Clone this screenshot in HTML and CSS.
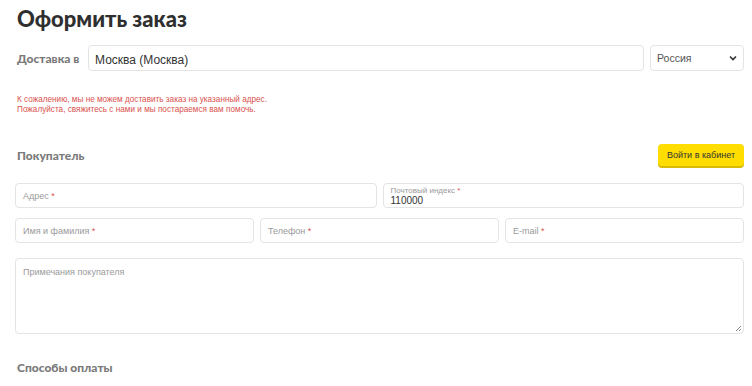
FILE: index.html
```html
<!DOCTYPE html>
<html lang="ru">
<head>
  <meta charset="UTF-8">
  <meta name="viewport" content="width=device-width, initial-scale=1.0">
  <title>Оформить заказ</title>
  <link rel="stylesheet" href="styles.css">
</head>
<body>
  <div class="order">
    <h1 class="order-title">Оформить заказ</h1>

    <div class="delivery">
      <div class="delivery-label">Доставка в</div>
      <div class="delivery-city">Москва (Москва)</div>
      <div class="delivery-country">
        Россия
        <svg width="8" height="6" viewBox="0 0 8 6"><path d="M1 1.5 L4 4.5 L7 1.5" fill="none" stroke="#333" stroke-width="1.6"/></svg>
      </div>
    </div>

    <div class="delivery-error">
      К сожалению, мы не можем доставить заказ на указанный адрес.<br>
      Пожалуйста, свяжитесь с нами и мы постараемся вам помочь.
    </div>

    <div class="section-head">
      <h2 class="section-title">Покупатель</h2>
      <button class="login-btn">Войти в кабинет</button>
    </div>

    <div class="field-row">
      <div class="field">Адрес <span class="req">*</span></div>
      <div class="field field-filled">
        <span class="field-label">Почтовый индекс <span class="req">*</span></span>
        <span class="field-value">110000</span>
      </div>
    </div>

    <div class="field-row">
      <div class="field">Имя и фамилия <span class="req">*</span></div>
      <div class="field">Телефон <span class="req">*</span></div>
      <div class="field">E-mail <span class="req">*</span></div>
    </div>

    <div class="field field-area">Примечания покупателя<svg class="resize" width="8" height="8" viewBox="0 0 8 8"><path d="M7 2 L2 7 M7 5 L5 7" stroke="#888" stroke-width="1"/></svg></div>

    <h2 class="section-title section-pay">Способы оплаты</h2>
  </div>
</body>
</html>
```

FILE: styles.css
```css
body, html {
  margin: 0;
  padding: 0;
  background-color: #ffffff;
  font-family: "Liberation Sans", Arial, sans-serif;
  overflow: hidden;
}

.order {
  padding: 0 8px 0 15px;
}

.order-title {
  margin: 6px 0 0 2px;
  font-family: Lato, "Open Sans", sans-serif;
  font-size: 22px;
  font-weight: 900;
  line-height: 26px;
  color: #2f2f2f;
}

.delivery {
  display: flex;
  align-items: center;
  margin-top: 13px;
  height: 26px;
}

.delivery-label {
  width: 71px;
  padding-left: 2px;
  font-family: Lato, "Open Sans", sans-serif;
  font-size: 12px;
  font-weight: 900;
  color: #7a7a7a;
}

.delivery-city {
  flex: 1;
  height: 26px;
  box-sizing: border-box;
  border: 1px solid #e4e4e4;
  border-radius: 4px;
  padding: 7px 6px 0;
  font-size: 12px;
  color: #333;
}

.delivery-country {
  width: 94px;
  height: 26px;
  margin-left: 6px;
  box-sizing: border-box;
  border: 1px solid #e4e4e4;
  border-radius: 4px;
  padding: 0 6px;
  display: flex;
  align-items: center;
  justify-content: space-between;
  font-size: 10.5px;
  color: #555;
}

.delivery-error {
  margin: 24px 0 0 2px;
  font-size: 8.2px;
  line-height: 10px;
  color: #d9534f;
}

.section-head {
  display: flex;
  align-items: center;
  justify-content: space-between;
  margin-top: 29px;
}

.section-title {
  margin: 0 0 0 2px;
  font-family: Lato, "Open Sans", sans-serif;
  font-size: 12px;
  font-weight: 900;
  color: #7a7a7a;
}

.login-btn {
  width: 86px;
  height: 22px;
  border: none;
  border-radius: 4px;
  background-color: #ffdd00;
  box-shadow: 0 2px 0 #d8bb00;
  font-family: "Liberation Sans", Arial, sans-serif;
  font-size: 9px;
  color: #333;
  padding: 0;
}

.field-row {
  display: flex;
  gap: 6px;
  margin-top: 10px;
}

.section-head + .field-row {
  margin-top: 17px;
}

.field {
  flex: 1;
  height: 25px;
  box-sizing: border-box;
  border: 1px solid #e4e4e4;
  border-radius: 4px;
  padding: 0 7px;
  display: flex;
  align-items: center;
  font-size: 9px;
  color: #9a9a9a;
  white-space: pre;
}

.req {
  color: #d9534f;
}

.field-filled {
  flex-direction: column;
  align-items: flex-start;
  justify-content: center;
  padding-top: 1px;
}

.field-label {
  font-size: 8px;
  line-height: 9px;
  color: #9a9a9a;
}

.field-value {
  font-size: 10px;
  line-height: 11px;
  color: #333;
}

.field-area {
  position: relative;
  height: 76px;
  margin-top: 15px;
  align-items: flex-start;
  padding-top: 8px;
}

.resize {
  position: absolute;
  right: 1px;
  bottom: 1px;
}

.section-pay {
  margin-top: 26px;
}
```
